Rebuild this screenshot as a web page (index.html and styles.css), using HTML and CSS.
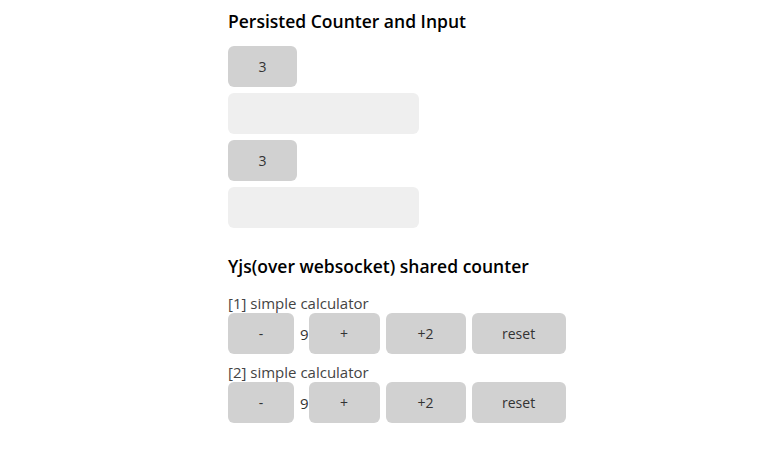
FILE: index.html
```html
<!DOCTYPE html>
<html>
<head>
<meta charset="utf-8">
<link rel="stylesheet" href="styles.css">
</head>
<body>
<main class="page">
  <section class="persisted">
    <h2 class="title">Persisted Counter and Input</h2>
    <div class="stack">
      <button class="btn btn-count">3</button>
      <input class="field" type="text">
      <button class="btn btn-count">3</button>
      <input class="field" type="text">
    </div>
  </section>
  <section class="shared">
    <h2 class="title">Yjs(over websocket) shared counter</h2>
    <div class="calc">
      <div class="calc-label">[1] simple calculator</div>
      <div class="calc-row">
        <button class="btn btn-minus">-</button>
        <span class="calc-value">9</span>
        <button class="btn btn-plus">+</button>
        <button class="btn btn-plus2">+2</button>
        <button class="btn btn-reset">reset</button>
      </div>
    </div>
    <div class="calc">
      <div class="calc-label">[2] simple calculator</div>
      <div class="calc-row">
        <button class="btn btn-minus">-</button>
        <span class="calc-value">9</span>
        <button class="btn btn-plus">+</button>
        <button class="btn btn-plus2">+2</button>
        <button class="btn btn-reset">reset</button>
      </div>
    </div>
  </section>
</main>
</body>
</html>
```

FILE: styles.css
```css
html, body {
  margin: 0;
  padding: 0;
  background: #ffffff;
}
body {
  font-family: "Open Sans", "Noto Sans", sans-serif;
  color: #444444;
}
.page {
  padding: 8px 0 0 228px;
}
.title {
  margin: 0;
  font-size: 17.5px;
  font-weight: 600;
  line-height: 26px;
  color: #000000;
}
.persisted .title {
  margin-bottom: 12px;
}
.stack {
  display: flex;
  flex-direction: column;
  align-items: flex-start;
  gap: 6px;
}
.btn {
  font-family: "Open Sans", "Noto Sans", sans-serif;
  font-size: 14px;
  color: #333333;
  background: #d1d1d1;
  border: none;
  border-radius: 6px;
  height: 41px;
  padding: 0;
  margin: 0;
  text-align: center;
}
.btn-count { width: 69px; }
.field {
  box-sizing: border-box;
  width: 191px;
  height: 41px;
  border: none;
  border-radius: 6px;
  background: #efefef;
  margin: 0;
  padding: 0 10px;
}
.shared {
  margin-top: 25px;
}
.shared .title {
  margin-bottom: 14px;
}
.calc + .calc {
  margin-top: 8px;
}
.calc-label {
  font-size: 15px;
  line-height: 20px;
  color: #444444;
}
.calc-row {
  display: flex;
  align-items: center;
}
.calc-value {
  font-size: 15px;
  color: #333333;
  margin-left: 6px;
  line-height: 20px;
}
.btn-minus { width: 66px; }
.btn-plus { width: 71px; margin-right: 6px; }
.btn-plus2 { width: 80px; margin-right: 6px; }
.btn-reset { width: 94px; }
```
